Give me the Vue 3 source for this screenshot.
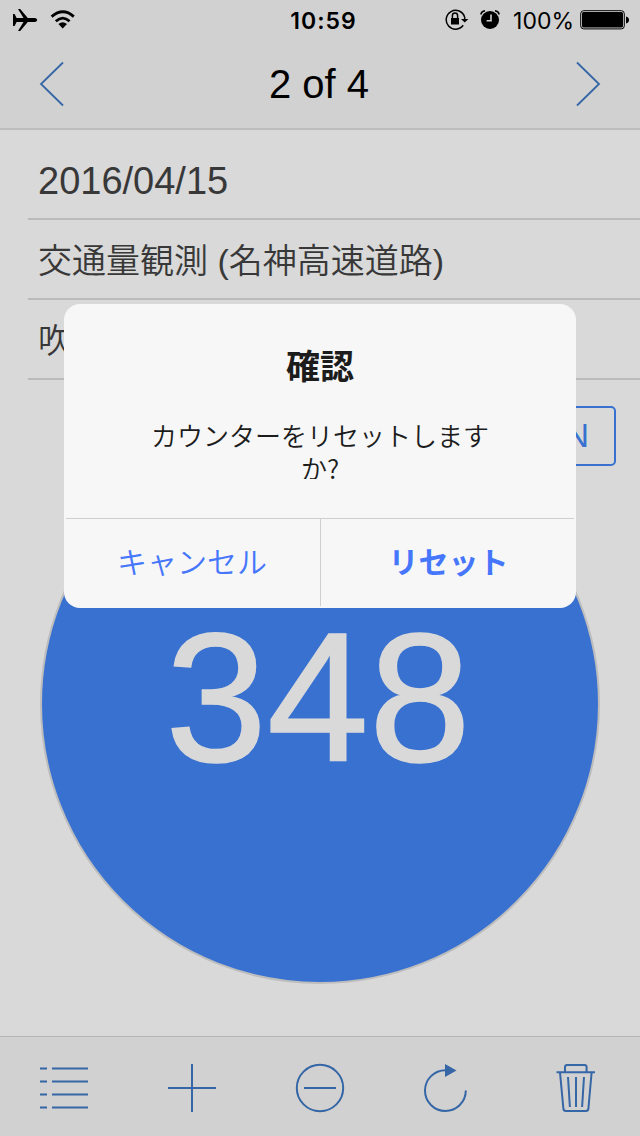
<template>
  <div class="screen">
    <header class="header">
      <div class="status-bar">
        <div class="status-left">
          <svg class="plane" width="26" height="24" viewBox="0 0 26 24">
            <path d="M0 6h1.600L3.600 10h6.900L5 1h2.200l7.600 9h7.200q2.200.4 2.200 2t-2.200 2h-7.200L7.200 23H5l5.500-9H3.600L1.600 18H0z" />
          </svg>
          <svg class="wifi" width="26" height="20" viewBox="0 0 26 20">
            <path class="arc" d="M1.600 6.600Q13-3 23.800 6.600M5.800 11.200q7-6.200 13.800 0" />
            <path d="M8.400 14q4.300-3.600 8.600 0l-4.300 4.600z" />
          </svg>
        </div>
        <span class="status-time">10:59</span>
        <div class="status-right">
          <svg width="24" height="22" viewBox="0 0 24 22">
            <path class="ring" d="M19.600 8A9.400 9.400 0 1 0 18.200 16.300M19.700 8v3" />
            <path d="M16 10h7.400l-3.700 3.600zM6 9h8v6.500H6z" />
            <path class="ring" d="M7.400 9V6.700a2.600 2.600 0 0 1 5.200 0V9" />
          </svg>
          <svg class="alarm" width="20" height="22" viewBox="0 0 20 22">
            <circle cx="10" cy="11" r="9" />
            <path class="ring" d="M.8 5.500Q1.500 2.300 5 1.800M15 1.800q3.500.5 4.200 3.700" />
            <path class="hands" d="M11 5.600v6.200H6.600" />
          </svg>
          <span class="status-percent">{{ battery }}%</span>
          <svg width="50" height="20" viewBox="0 0 50 20">
            <rect class="battery-frame" x=".7" y=".7" width="43.600" height="18.200" rx="3" />
            <rect x="2" y="2" width="41" height="15.600" rx="1.500" />
            <path d="M46 6.500q3 .8 3 3.500t-3 3.500z" />
          </svg>
        </div>
      </div>
      <nav class="pager">
        <svg class="line-icon chevron" width="26" height="46" viewBox="0 0 26 46">
          <path d="M24 1.500L2 23l22 21.500" />
        </svg>
        <h1 class="pager-title">{{ page }} of {{ pageCount }}</h1>
        <svg class="line-icon chevron" width="26" height="46" viewBox="0 0 26 46">
          <path d="M2 1.500L24 23 2 44.500" />
        </svg>
      </nav>
    </header>

    <main class="content">
      <div class="fields">
        <div v-for="(field, i) in fields" :key="i" class="field" :class="{ 'field-date': i === 0 }">
          {{ field }}
        </div>
      </div>
      <div class="lock-row">
        <button class="lock-button">OPEN</button>
      </div>
      <button class="counter">{{ count }}</button>
    </main>

    <footer class="toolbar">
      <svg class="line-icon" width="128" height="100" viewBox="0 0 128 100">
        <path d="M40 31.500h7M52 31.500h36M40 44.500h7M52 44.500h36M40 57.500h7M52 57.500h36M40 70.500h7M52 70.500h36" />
      </svg>
      <svg class="line-icon" width="128" height="100" viewBox="0 0 128 100">
        <path d="M64 27v48M40 51h48" />
      </svg>
      <svg class="line-icon" width="128" height="100" viewBox="0 0 128 100">
        <circle cx="64" cy="51" r="23.200" />
        <path d="M48 51h32" />
      </svg>
      <svg class="line-icon" width="128" height="100" viewBox="0 0 128 100">
        <path d="M61.500 33.200A20.400 20.400 0 1 0 81.800 53.600" />
        <path class="solid" d="M61 27l11.500 6.500L61 40z" />
      </svg>
      <svg class="line-icon" width="128" height="100" viewBox="0 0 128 100">
        <path d="M44.500 35.200H83M53 35v-4.800q0-2.200 2.200-2.200h17.200q2.200 0 2.200 2.200V35" />
        <path d="M48 35.500l3.400 36.200q.2 2.300 2.500 2.300h20q2.300 0 2.500-2.300L79.600 35.500M56 40l1.900 30M64 40v30M72 40l-1.900 30" />
      </svg>
    </footer>

    <div class="overlay">
      <div class="dialog">
        <div class="dialog-body">
          <h2 class="dialog-title">確認</h2>
          <p class="dialog-message">カウンターをリセットします<br>か?</p>
        </div>
        <div class="dialog-actions">
          <button class="dialog-button">キャンセル</button>
          <button class="dialog-button dialog-button-primary">リセット</button>
        </div>
      </div>
    </div>
  </div>
</template>

<script setup>
import { ref } from 'vue'

const battery = ref(100)
const page = ref(2)
const pageCount = ref(4)
const count = ref(348)
const fields = ref(['2016/04/15', '交通量観測 (名神高速道路)', '吹田'])
</script>

<style>
body {
  margin: 0;
}
</style>

<style scoped>
.screen {
  position: relative;
  display: flex;
  flex-direction: column;
  width: 640px;
  height: 1136px;
  overflow: hidden;
  background: #d9d9d9;
  font-family: "Liberation Sans", "Noto Sans CJK JP", sans-serif;
}

button {
  padding: 0;
  border: none;
  background: none;
  font-family: inherit;
}

svg {
  display: block;
  flex: none;
}

.header {
  box-sizing: border-box;
  height: 130px;
  border-bottom: 2px solid #bdbdbd;
  background: #d1d1d1;
}

.status-bar {
  display: grid;
  grid-template-columns: 1fr auto 1fr;
  align-items: center;
  height: 40px;
  padding: 0 10px 0 13px;
  font-family: Inter, "Liberation Sans", sans-serif;
}

.status-left,
.status-right {
  display: flex;
  align-items: center;
}

.status-right {
  justify-content: flex-end;
}

.wifi {
  margin-left: 11px;
}

.arc,
.ring {
  fill: none;
  stroke: #000;
}

.arc {
  stroke-width: 2.8;
}

.ring {
  stroke-width: 1.5;
}

.alarm {
  margin-left: 11px;
}

.hands {
  fill: none;
  stroke: #d1d1d1;
  stroke-width: 1.6;
}

.battery-frame {
  fill: none;
  stroke: #000;
  stroke-width: 1;
}

.status-time {
  padding: 2px 0 0 4px;
  font-size: 23px;
  font-weight: 600;
  letter-spacing: 1px;
}

.status-percent {
  margin: 0 6px 0 13px;
  padding-top: 1px;
  font-size: 23px;
}

.pager {
  display: flex;
  align-items: center;
  justify-content: space-between;
  height: 88px;
  padding: 0 39px;
}

.pager-title {
  margin: 0;
  padding: 1px 2px 0 0;
  font-size: 40px;
  font-weight: 400;
}

.line-icon {
  fill: none;
  stroke: #3566a6;
  stroke-width: 2;
}

.chevron {
  stroke-width: 1.8;
}

.solid {
  fill: #3566a6;
  stroke: none;
}

.content {
  flex: 1;
}

.fields {
  margin-left: 28px;
  padding-top: 10px;
}

.field {
  box-sizing: border-box;
  height: 80px;
  padding-left: 10px;
  border-bottom: 2px solid #bababa;
  color: #383838;
  font-size: 34px;
  font-weight: 350;
  line-height: 82px;
  white-space: nowrap;
}

.field-date {
  font-size: 38px;
  line-height: 83px;
}

.lock-row {
  display: flex;
  justify-content: flex-end;
  padding: 26px 24px 0 0;
}

.lock-button {
  box-sizing: border-box;
  width: 150px;
  height: 60px;
  padding-bottom: 2px;
  border: 2px solid #3971d0;
  border-radius: 5px;
  color: #3971d0;
  font-size: 34px;
}

.counter {
  display: block;
  box-sizing: border-box;
  width: 560px;
  height: 560px;
  margin: -42px auto 0;
  padding: 0 4px 12px 0;
  border: 2px solid #bdbdbd;
  border-radius: 50%;
  background: #3971d0;
  color: #d9d9d9;
  font-size: 183px;
  line-height: 544px;
  -webkit-text-stroke: 1.5px #d9d9d9;
}

.toolbar {
  display: flex;
  box-sizing: border-box;
  height: 100px;
  border-top: 1px solid #b5b5b5;
  background: #d1d1d1;
}

.overlay {
  position: absolute;
  inset: 0;
  display: flex;
  justify-content: center;
  align-items: flex-start;
  padding-top: 304px;
}

.dialog {
  box-sizing: border-box;
  width: 512px;
  height: 304px;
  padding: 0 2px 2px;
  border-radius: 16px;
  background: #f7f7f7;
  color: #1c1c1c;
}

.dialog-body {
  box-sizing: border-box;
  height: 214px;
  padding-top: 37px;
  text-align: center;
}

.dialog-title {
  margin: 0;
  font-size: 34px;
  font-weight: 700;
  line-height: 52px;
}

.dialog-message {
  height: 61px;
  margin: 25px 0 0;
  overflow: hidden;
  font-family: "Noto Sans CJK JP", sans-serif;
  font-size: 26px;
  font-weight: 350;
  line-height: 33px;
}

.dialog-actions {
  display: grid;
  grid-template-columns: 1fr 1fr;
  height: 88px;
  box-sizing: border-box;
  border-top: 1px solid #cfcfcf;
}

.dialog-button {
  padding: 0 2px 5px 0;
  color: #4576fb;
  font-size: 30px;
  font-weight: 350;
}

.dialog-button-primary {
  padding: 0 0 5px 2px;
  border-left: 1px solid #cfcfcf;
  font-weight: 700;
}
</style>
